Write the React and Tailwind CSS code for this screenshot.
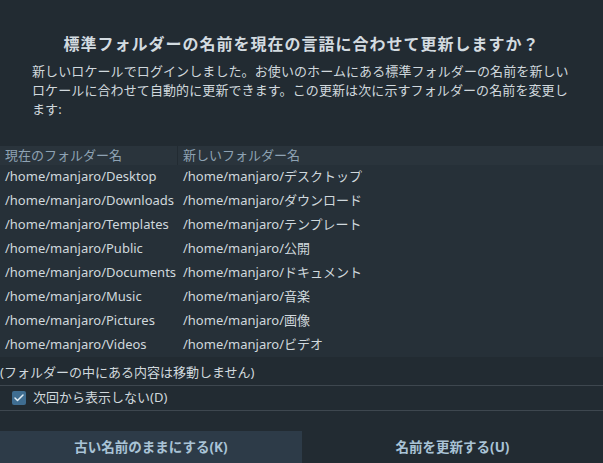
import React from 'react';
import { Check } from 'lucide-react';

const rows = [
  ['Desktop', 'デスクトップ'],
  ['Downloads', 'ダウンロード'],
  ['Templates', 'テンプレート'],
  ['Public', '公開'],
  ['Documents', 'ドキュメント'],
  ['Music', '音楽'],
  ['Pictures', '画像'],
  ['Videos', 'ビデオ'],
];

const font = { fontFamily: '"Noto Sans", "Noto Sans CJK JP", sans-serif' };

export default function App() {
  return (
    <div
      className="w-[603px] h-[463px] bg-[#222b32] text-[#d0d8dd] flex flex-col overflow-hidden"
      style={font}
    >
      <h1 className="mt-[33px] text-center text-[16px] font-bold leading-[22px] text-[#d3dbe0] tracking-[1px]">
        標準フォルダーの名前を現在の言語に合わせて更新しますか？
      </h1>
      <p className="mt-[7px] px-[32px] text-[13px] leading-[19px] tracking-[0.1px] text-[#d0d8dd]">
        新しいロケールでログインしました。お使いのホームにある標準フォルダーの名前を新しいロケールに合わせて自動的に更新できます。この更新は次に示すフォルダーの名前を変更します:
      </p>

      <div className="mt-[27px] bg-[#263038] text-[13px]">
        <div className="flex h-[19px] items-center bg-[#2a343c] text-[#8ea2b3]">
          <div className="w-[178px] pl-[5px] border-r border-[#222b32] h-full flex items-center">現在のフォルダー名</div>
          <div className="pl-[5px]">新しいフォルダー名</div>
        </div>
        {rows.map(([en, ja]) => (
          <div key={en} className="flex h-[24px] items-center">
            <div className="w-[178px] pl-[5px] whitespace-nowrap">/home/manjaro/{en}</div>
            <div className="pl-[5px] whitespace-nowrap">/home/manjaro/{ja}</div>
          </div>
        ))}
      </div>

      <div className="mt-[6px] text-[13px] leading-[18px] whitespace-nowrap">(フォルダーの中にある内容は移動しません)</div>
      <div className="mt-[4px] border-t border-[#3e474f]" />
      <div className="flex items-center h-[24px] pl-[12px] gap-[7px] text-[13px]">
        <span className="w-[14px] h-[14px] bg-[#3f6d91] rounded-[2px] flex items-center justify-center">
          <Check size={12} strokeWidth={3} className="text-[#e4eef5]" />
        </span>
        <span>次回から表示しない(D)</span>
      </div>
      <div className="border-t border-[#3e474f]" />

      <div className="mt-auto flex h-[32px] text-[13.5px] font-bold text-[#a9c3d6]">
        <div className="w-[302px] bg-[#2d3b48] flex items-center justify-center">古い名前のままにする(K)</div>
        <div className="flex-1 flex items-center justify-center">名前を更新する(U)</div>
      </div>
    </div>
  );
}
